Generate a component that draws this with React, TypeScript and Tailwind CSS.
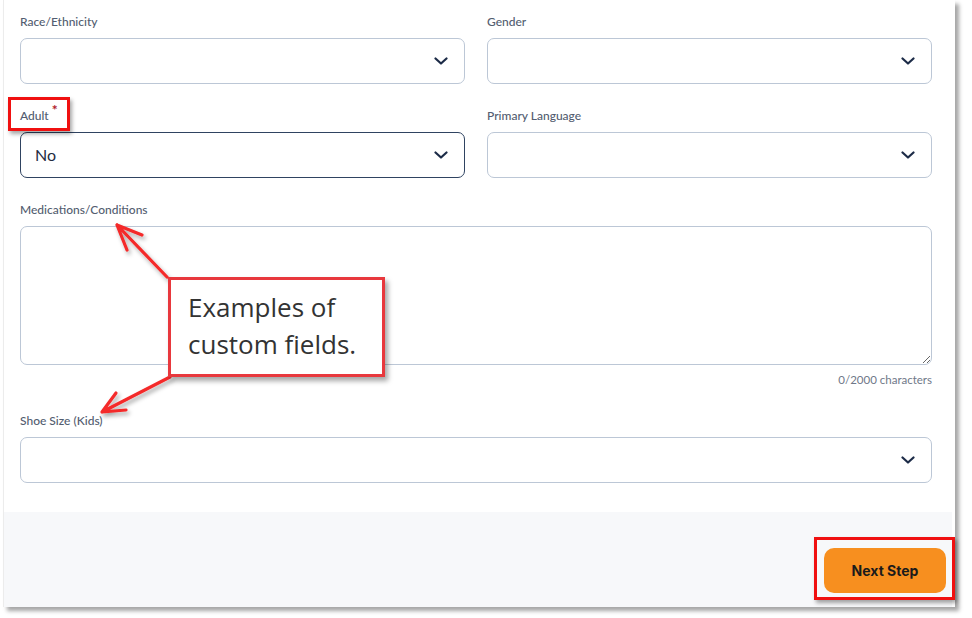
import React from 'react';

const labelCls = "block text-[12px] leading-[18px] font-medium text-[#535d70] mb-2 pt-[1px] -mb-[1px]";
const boxCls = "h-[46px] rounded-[7px] border bg-white flex items-center justify-between pl-[14px] pr-[16px]";

const Chevron = () => (
    <svg width="14" height="8" viewBox="0 0 14 8" fill="none">
        <polyline points="1.5,1.5 7,6.5 12.5,1.5" stroke="#1c2b47" strokeWidth="2.2" strokeLinecap="round" strokeLinejoin="round" />
    </svg>
);

interface SelectProps {
    label: string;
    value?: string;
    required?: boolean;
    active?: boolean;
}

const SelectField: React.FC<SelectProps> = ({ label, value, required, active }) => (
    <div className="flex flex-col">
        <label className="block text-[12px] leading-[18px] font-medium text-[#535d70] pt-[1px] mb-[7px]">
            {label}
            {required && <span className="text-[#b01c2b] relative -top-[5px] ml-[3px] text-[14px] font-bold leading-none">*</span>}
        </label>
        <div className={`${boxCls} ${active ? 'border-[#2f4361]' : 'border-[#bcc7d6]'}`}>
            <span className="text-[16px] text-[#1f2c3f]">{value}</span>
            <Chevron />
        </div>
    </div>
);

export default function App() {
    return (
        <div className="relative w-[972px] h-[618px] bg-white overflow-hidden" style={{ fontFamily: 'Lato, "Open Sans", sans-serif' }}>
            {/* screenshot panel */}
            <div className="ml-[3px] w-[952px] h-[607px] bg-white border-l border-[#ececec] shadow-[4px_4px_4px_rgba(0,0,0,0.35)] flex flex-col">
                <div className="flex-1 pl-[16px] pr-[23px] pt-[12px]">
                    <div className="grid grid-cols-2 gap-x-[22px] gap-y-[22px]">
                        <SelectField label="Race/Ethnicity" />
                        <SelectField label="Gender" />
                        <SelectField label="Adult" value="No" required active />
                        <SelectField label="Primary Language" />
                    </div>

                    <div className="mt-[22px] flex flex-col">
                        <label className="block text-[12px] leading-[18px] font-medium text-[#535d70] pt-[1px] mb-[7px]">Medications/Conditions</label>
                        <textarea className="h-[139px] rounded-[7px] border border-[#bcc7d6] bg-white outline-none" />
                        <div className="mt-[7px] text-right text-[11.5px] leading-[16px] text-[#6f7888]">0/2000 characters</div>
                    </div>

                    <div className="mt-[23px]">
                        <SelectField label="Shoe Size (Kids)" />
                    </div>
                </div>

                <div className="h-[95px] mr-[3px] bg-[#f7f8fa] flex justify-end items-start pt-[36px] pr-[6px]">
                    <button className="w-[122px] h-[45px] rounded-[10px] bg-[#f78f1f] text-[14px] font-bold text-[#1b1b1b]" style={{ fontFamily: 'Inter, sans-serif' }}>
                        Next Step
                    </button>
                </div>
            </div>

            {/* annotations */}
            <div className="absolute left-[8px] top-[97px] w-[62px] h-[34px] border-[3px] border-[#f01010] shadow-[2px_3px_4px_rgba(0,0,0,0.35)]" />
            <div className="absolute left-[814px] top-[537px] w-[141px] h-[63px] border-[3px] border-[#f01010] shadow-[2px_3px_4px_rgba(0,0,0,0.35)]" />

            <svg className="absolute left-0 top-0 pointer-events-none" width="972" height="618">
                <defs>
                    <filter id="sh" x="-20%" y="-20%" width="140%" height="140%">
                        <feDropShadow dx="2" dy="3" stdDeviation="2" floodColor="#000" floodOpacity="0.35" />
                    </filter>
                </defs>
                <g stroke="#f42a2a" strokeWidth="3.2" strokeLinecap="round" strokeLinejoin="round" fill="none" filter="url(#sh)">
                    <path d="M167 277 L117 225 M117 225 L142 235 M117 225 L127 250" />
                    <path d="M170 377 L102 412 M102 412 L116 393 M102 412 L126 410" />
                </g>
            </svg>

            <div className="absolute left-[168px] top-[277px] w-[217px] h-[100px] bg-white border-[3px] border-[#e8383d] shadow-[3px_4px_5px_rgba(0,0,0,0.35)] pl-[17px] pt-[9px] text-[26px] leading-[37px] text-[#333333]" style={{ fontFamily: '"Open Sans", sans-serif' }}>
                <div>Examples of</div>
                <div>custom fields.</div>
            </div>
        </div>
    );
}
